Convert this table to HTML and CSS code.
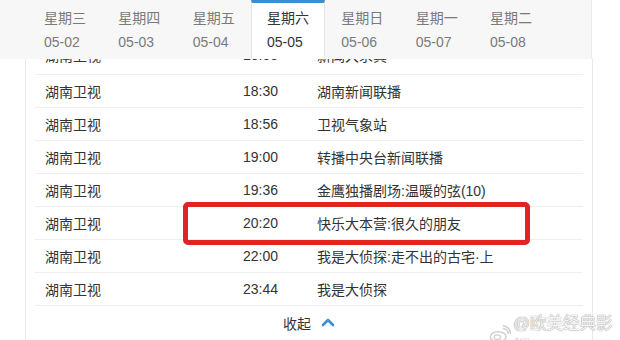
FILE: index.html
```html
<!DOCTYPE html>
<html lang="zh-CN">
<head>
<meta charset="utf-8">
<title>节目单</title>
<link rel="stylesheet" href="styles.css">
</head>
<body>
<div class="page">
  <nav class="tabs">
    <div class="tab"><span>星期三</span><span>05-02</span></div>
    <div class="tab"><span>星期四</span><span>05-03</span></div>
    <div class="tab"><span>星期五</span><span>05-04</span></div>
    <div class="tab active"><span>星期六</span><span>05-05</span></div>
    <div class="tab"><span>星期日</span><span>05-06</span></div>
    <div class="tab"><span>星期一</span><span>05-07</span></div>
    <div class="tab"><span>星期二</span><span>05-08</span></div>
  </nav>
  <section class="panel">
    <ul class="rows">
      <li class="row partial"><span>湖南卫视</span><span>18:00</span><span>新闻大求真</span></li>
      <li class="row"><span>湖南卫视</span><span>18:30</span><span>湖南新闻联播</span></li>
      <li class="row"><span>湖南卫视</span><span>18:56</span><span>卫视气象站</span></li>
      <li class="row"><span>湖南卫视</span><span>19:00</span><span>转播中央台新闻联播</span></li>
      <li class="row"><span>湖南卫视</span><span>19:36</span><span>金鹰独播剧场:温暖的弦(10)</span></li>
      <li class="row"><span>湖南卫视</span><span>20:20</span><span>快乐大本营:很久的朋友</span></li>
      <li class="row"><span>湖南卫视</span><span>22:00</span><span>我是大侦探:走不出的古宅·上</span></li>
      <li class="row"><span>湖南卫视</span><span>23:44</span><span>我是大侦探</span></li>
    </ul>
    <div class="collapse">
      <span>收起</span>
      <svg class="chev" width="14" height="10" viewBox="0 0 14 10"><path d="M2 8 L7 3 L12 8" fill="none" stroke="#3b8fd9" stroke-width="2.6" stroke-linecap="round" stroke-linejoin="round"/></svg>
    </div>
  </section>
  <div class="highlight"></div>
  <div class="watermark">
    <svg class="wb" width="24" height="20" viewBox="0 0 24 20"><ellipse cx="10" cy="13" rx="8.5" ry="5.5" fill="none" stroke="#cfcfcf" stroke-width="1.6"/><ellipse cx="9" cy="13.5" rx="3.5" ry="2.6" fill="none" stroke="#cfcfcf" stroke-width="1.4"/><path d="M15 4 A6 6 0 0 1 21 10" fill="none" stroke="#cfcfcf" stroke-width="1.6"/><path d="M15 1 A9 9 0 0 1 23.5 10" fill="none" stroke="#cfcfcf" stroke-width="1.6"/></svg>
    <span>@欧美经典影视</span>
  </div>
</div>
</body>
</html>
```
FILE: styles.css
```css
* { box-sizing: border-box; }
body {
  margin: 0;
  background: #fff;
  font-family: "Liberation Sans", "Noto Sans CJK SC", sans-serif;
  font-size: 14px;
  color: #333;
}
.page {
  position: relative;
  width: 620px;
  height: 340px;
  overflow: hidden;
}
.tabs {
  position: relative;
  z-index: 2;
  display: flex;
  width: 592px;
  height: 59px;
  padding-left: 28px;
  background: #f7f7f7;
  border-right: 1px solid #ececec;
}
.tab {
  width: 74.33px;
  flex: none;
  display: flex;
  flex-direction: column;
  padding: 6px 0 0 16px;
  line-height: 24px;
  color: #7a7a7a;
}
.tab.active {
  background: #fff;
  color: #333;
  border-top: 3px solid #3b8fcf;
  border-left: 1px solid #e6e6e6;
  border-right: 1px solid #e6e6e6;
  padding-top: 3px;
  padding-left: 15px;
}
.panel {
  position: relative;
  z-index: 1;
  margin-left: 25px;
  width: 568px;
  height: 281px;
  border-left: 1px solid #e8e8e8;
  border-right: 1px solid #e8e8e8;
  overflow: hidden;
}
.rows {
  list-style: none;
  margin: -17px 0 0;
  padding: 0 9px;
}
.row {
  display: grid;
  grid-template-columns: 198px 74px 1fr;
  align-items: center;
  height: 33px;
  padding-left: 10px;
  border-bottom: 1px solid #eeeeee;
  color: #333;
}
.row.partial { padding-bottom: 6px; }
.collapse {
  display: flex;
  align-items: center;
  justify-content: center;
  gap: 10px;
  height: 34px;
  color: #333;
}
.chev { margin-top: -2px; }
.highlight {
  position: absolute;
  left: 183px;
  top: 202px;
  width: 347px;
  height: 43px;
  border: 5px solid #e02323;
  border-radius: 5px;
  z-index: 3;
}
.watermark {
  position: absolute;
  left: 489px;
  top: 310px;
  display: flex;
  align-items: center;
  gap: 2px;
  z-index: 3;
  font-size: 16.5px;
  color: #f4f4f4;
  text-shadow: 0 0 1px #9a9a9a, 0 0 1px #9a9a9a;
}
```
